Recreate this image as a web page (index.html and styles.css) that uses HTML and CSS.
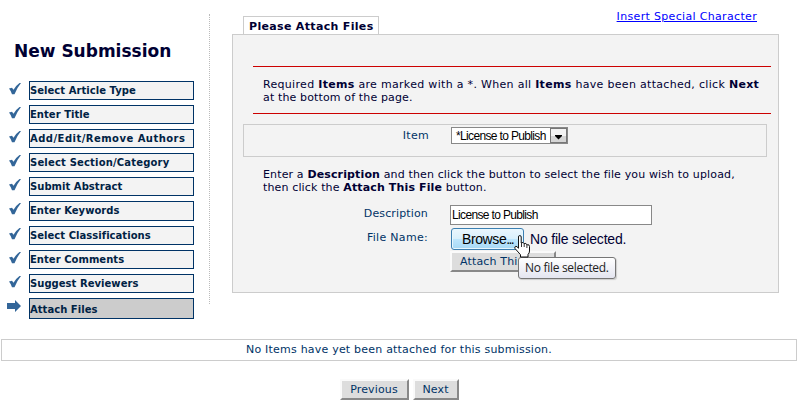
FILE: index.html
```html
<!DOCTYPE html>
<html lang="en">
<head>
    <meta charset="UTF-8">
    <title>New Submission - Attach Files</title>
    <link rel="stylesheet" href="styles.css">
</head>
<body>
    <svg width="0" height="0" class="symbols">
        <symbol id="check" viewBox="0 0 12 12">
            <path d="M0 5.500 3 4.800 4.500 6.800Q7.500 2 10.500 0H12Q8.200 4.500 5.500 11.300H3Q2 8 0 5.500Z" fill="#369"/>
        </symbol>
    </svg>

    <div class="main">
        <div class="sidebar">
            <h1>New Submission</h1>
            <ul class="steps">
                <li><svg><use href="#check"/></svg><a>Select Article Type</a></li>
                <li><svg><use href="#check"/></svg><a>Enter Title</a></li>
                <li><svg><use href="#check"/></svg><a class="authors">Add/Edit/Remove Authors</a></li>
                <li><svg><use href="#check"/></svg><a class="section">Select Section/Category</a></li>
                <li><svg><use href="#check"/></svg><a>Submit Abstract</a></li>
                <li class="tall"><svg><use href="#check"/></svg><a>Enter Keywords</a></li>
                <li><svg><use href="#check"/></svg><a>Select Classifications</a></li>
                <li><svg><use href="#check"/></svg><a>Enter Comments</a></li>
                <li><svg><use href="#check"/></svg><a>Suggest Reviewers</a></li>
                <li class="current">
                    <svg class="arrow" viewBox="0 0 14 12"><path d="M0 3h8V0l6 6-6 6V9H0z" fill="#369"/></svg>
                    <a>Attach Files</a>
                </li>
            </ul>
        </div>

        <div class="content">
            <div class="top-row">
                <h2 class="tab">Please Attach Files</h2>
                <a class="special" href="#">Insert Special Character</a>
            </div>

            <div class="panel">
                <div class="notice">
                    <span class="wide">Required <b>Items</b> are marked with a *. When all <b>Items</b> have been attached, click <b>Next</b></span><br>
                    at the bottom of the page.
                </div>

                <div class="item-row">
                    <label>Item</label>
                    <div class="select">
                        <span>*License to Publish</span>
                        <i><svg width="9" height="5" viewBox="0 0 9 5"><path d="M1 0h7v1L4.500 4.500 1 1z"/></svg></i>
                    </div>
                </div>

                <p class="help">
                    Enter a <b>Description</b> and then click the button to select the file you wish to upload,<br>
                    then click the <b>Attach This File</b> button.
                </p>

                <div class="form">
                    <label>Description</label>
                    <input class="description" type="text" value="License to Publish">
                    <label class="file-label">File Name:</label>
                    <div class="file">
                        <button class="browse">Browse<span class="dots">...</span></button>
                        <span>No file selected.</span>
                        <div class="tooltip">No file selected.</div>
                        <svg class="cursor" width="17" height="23" viewBox="0 0 17 23">
                            <path d="M4.500 13V2Q4.500.5 5.800.5T7.200 2v6Q9.500 6.500 10 8.700 12.300 7.500 12.800 9.800 15.500 9 15.500 11.500v4.500q0 2-1.500 3.500v2.500H6.500v-2.300L1 13.500Q.3 11.500 1.800 11.300T4.500 13.500" fill="#fff" stroke="#111"/>
                            <path d="M7.500 8v4M10.200 9v3M12.900 10v3" fill="none" stroke="#333"/>
                        </svg>
                    </div>
                    <button class="button attach">Attach This File</button>
                </div>
            </div>
        </div>
    </div>

    <div class="empty">No Items have yet been attached for this submission.</div>

    <div class="nav">
        <button class="button previous">Previous</button>
        <button class="button next">Next</button>
    </div>
</body>
</html>
```
FILE: styles.css
```css
* {
    margin: 0;
    padding: 0;
    box-sizing: border-box;
}

body {
    width: 798px;
    background: #fff;
    color: #003;
    font: 11px/13px Verdana, "DejaVu Sans", sans-serif;
    letter-spacing: 0.14px;
}

button, input {
    font: inherit;
    color: inherit;
    letter-spacing: inherit;
}

.symbols {
    display: block;
}

.main {
    display: flex;
    padding-top: 14px;
}

.sidebar {
    width: 210px;
    height: 290px;
    border-right: 1px dotted #bbb;
}

h1 {
    margin: 26px 0 0 14px;
    font-size: 17px;
    line-height: 22px;
    letter-spacing: 0;
    white-space: nowrap;
}

.steps {
    margin-top: 19px;
    list-style: none;
}

.steps li {
    display: flex;
    height: 19px;
    margin-bottom: 5px;
    padding-left: 9px;
}

.steps svg {
    width: 12px;
    height: 12px;
    margin: 2px 8px 0 0;
}

.steps a {
    width: 165px;
    border: 1px solid #036;
    background: #f3f3f3;
    color: #024;
    font-size: 10px;
    font-weight: bold;
    line-height: 17px;
    letter-spacing: 0.04px;
    white-space: nowrap;
}

.steps .authors {
    letter-spacing: 0.47px;
}

.steps .section {
    letter-spacing: 0.18px;
}

.steps .tall {
    height: 20px;
}

.steps .tall a {
    line-height: 18px;
}

.steps .current {
    height: 21px;
    padding-left: 7px;
}

.steps .current a {
    background: #ccc;
    line-height: 21px;
}

.steps .arrow {
    width: 14px;
}

.content {
    width: 547px;
    margin-left: 22px;
}

.top-row {
    display: flex;
    justify-content: space-between;
    height: 20px;
    padding: 0 22px 0 11px;
}

.tab {
    width: 136px;
    height: 18px;
    margin-top: 2px;
    padding-left: 5px;
    border: 1px solid #ccc;
    border-bottom: 0;
    font-size: 11px;
    line-height: 19px;
    letter-spacing: 0.33px;
    white-space: nowrap;
}

.special {
    margin-top: -5px;
    color: #00f;
    line-height: 15px;
    letter-spacing: 0.33px;
}

.panel {
    height: 259px;
    padding: 31px 6px 0 10px;
    border: 1px solid #ccc;
    background: #f3f3f3;
}

.notice {
    height: 48px;
    margin: 0 1px 0 10px;
    padding: 11px 0 0 10px;
    border-top: 1px solid #c00;
    border-bottom: 1px solid #c00;
    white-space: nowrap;
}

.notice .wide {
    letter-spacing: 0.31px;
}

.item-row {
    display: flex;
    width: 524px;
    height: 33px;
    margin-top: 10px;
    border: 1px solid #ccc;
}

label {
    color: #036;
    text-align: right;
}

.item-row label {
    width: 185px;
    margin: 4px 22px 0 0;
    letter-spacing: 0.3px;
}

.select {
    display: flex;
    justify-content: space-between;
    width: 117px;
    height: 17px;
    margin-top: 2px;
    padding-left: 4px;
    border: 1px solid #888;
    background: #fff;
    color: #000;
    font: 12px/16px Arial, "Liberation Sans", sans-serif;
    letter-spacing: -0.65px;
    white-space: nowrap;
}

.select i {
    display: flex;
    align-items: flex-end;
    justify-content: center;
    width: 17px;
    height: 15px;
    padding-bottom: 2px;
    border: 1px solid #777;
    background: linear-gradient(#f3f3f3 50%, #d5d5d5 50%);
}

.help {
    margin: 11px 0 0 20px;
    white-space: nowrap;
}

.form {
    display: grid;
    grid-template-columns: 185px 1fr;
    grid-template-rows: 23px 23px 22px;
    column-gap: 22px;
    margin-top: 11px;
}

.form label {
    padding-top: 2px;
}

.form .file-label {
    padding-top: 3px;
    letter-spacing: 0.3px;
}

.description {
    width: 202px;
    height: 20px;
    padding: 0 1px;
    border: 1px solid #888;
    background: #fff;
    color: #000;
    font: 12px Arial, "Liberation Sans", sans-serif;
    letter-spacing: -0.65px;
}

.file {
    position: relative;
    display: flex;
    padding-left: 1px;
    font: 14px/23px Arial, "Liberation Sans", sans-serif;
    letter-spacing: -0.2px;
    white-space: nowrap;
}

.browse {
    width: 73px;
    height: 22px;
    margin-right: 6px;
    padding-left: 10px;
    border: 1px solid #3c7fb1;
    border-radius: 3px;
    background: linear-gradient(#eaf6fd, #d9f0fc 50%, #bee6fd 50%, #a7d9f5);
    box-shadow: inset 0 0 0 1px #e8f7fe;
    color: #000;
    line-height: 20px;
    letter-spacing: -0.4px;
    text-align: left;
}

.dots {
    letter-spacing: -1.7px;
}

.tooltip {
    position: absolute;
    z-index: 2;
    left: 68px;
    top: 29px;
    width: 98px;
    height: 22px;
    padding-left: 6px;
    border: 1px solid #767676;
    border-radius: 3px;
    background: linear-gradient(#fff, #e4e5f0);
    box-shadow: 1px 1px 1px #ccc;
    color: #222;
    font: 12px/20px "Segoe UI", "Open Sans", sans-serif;
    letter-spacing: -0.3px;
}

.cursor {
    position: absolute;
    z-index: 3;
    left: 64px;
    top: 7px;
}

.button {
    height: 21px;
    border: 2px solid;
    border-color: #fafafa #888 #888 #fafafa;
    background: #ddd;
    color: #036;
    line-height: 17px;
    white-space: nowrap;
}

.attach {
    grid-column: 2;
    width: 106px;
}

.empty {
    width: 796px;
    height: 22px;
    margin: 35px 0 0 1px;
    border: 1px solid #ccc;
    color: #036;
    line-height: 20px;
    letter-spacing: 0.21px;
    text-align: center;
}

.nav {
    display: flex;
    justify-content: center;
    gap: 4px;
    margin-top: 18px;
}

.previous {
    width: 69px;
}

.next {
    width: 46px;
}
```
